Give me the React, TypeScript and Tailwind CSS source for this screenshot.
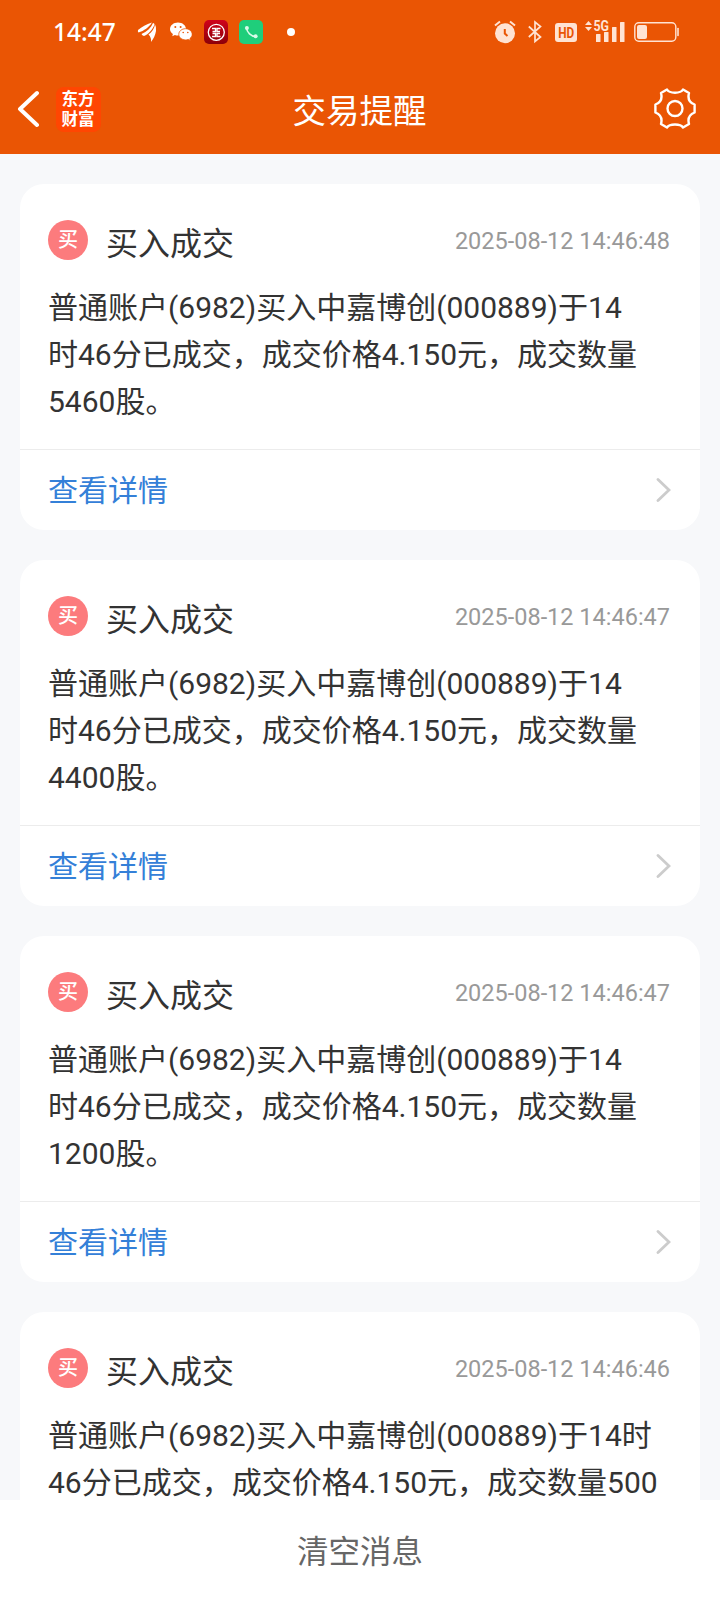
import React from "react";

type Message = {
  time: string;
  lines: string[];
};

// Данные уведомлений
const messages: Message[] = [
  {
    time: "2025-08-12 14:46:48",
    lines: [
      "普通账户(6982)买入中嘉博创(000889)于14",
      "时46分已成交，成交价格4.150元，成交数量",
      "5460股。",
    ],
  },
  {
    time: "2025-08-12 14:46:47",
    lines: [
      "普通账户(6982)买入中嘉博创(000889)于14",
      "时46分已成交，成交价格4.150元，成交数量",
      "4400股。",
    ],
  },
  {
    time: "2025-08-12 14:46:47",
    lines: [
      "普通账户(6982)买入中嘉博创(000889)于14",
      "时46分已成交，成交价格4.150元，成交数量",
      "1200股。",
    ],
  },
  {
    time: "2025-08-12 14:46:46",
    lines: [
      "普通账户(6982)买入中嘉博创(000889)于14时",
      "46分已成交，成交价格4.150元，成交数量500",
    ],
  },
];

const StatusBar: React.FC = () => (
  <div className="flex h-16 items-center justify-between pl-[53px] pr-[40px]">
    <div className="flex items-center">
      <span className="w-[64px] whitespace-nowrap font-['Noto_Sans'] text-[24.5px] leading-none font-medium text-white">
        14:47
      </span>
      {/* Крыло */}
      <svg className="ml-[20px]" width="20" height="20" viewBox="0 0 20 20" fill="#fff">
        <path d="M1 8C5 5 9 2 15 .5C12 5 7 9 1.500 10.500Q.5 9.500 1 8Z" />
        <path d="M4.500 12C10 9.500 14 6 16 1Q17.500 1 17.500 2.500C15.500 8 11.500 12 7 14Q5 13.500 4.500 12Z" />
        <path d="M11.500 12.500C15 10 17.500 6 18 2.500Q19.500 5 19 9C18.300 13 16.500 17 14 20C14.500 17 13.500 14.500 11.500 12.500Z" />
      </svg>
      {/* WeChat */}
      <svg className="ml-[13px]" width="22" height="20" viewBox="0 0 22 20">
        <path d="M8 .5C3.600.5 0 3.400 0 7C0 9 1.100 10.800 2.900 12L2.300 14.200L4.900 12.900Q6.400 13.500 8 13.500C12.400 13.500 16 10.600 16 7S12.400.5 8 .5Z" fill="#fff" />
        <path d="M15.500 6.700C11.800 6.700 8.800 9.200 8.800 12.300S11.800 17.900 15.500 17.900Q17 17.900 18.200 17.400L20.400 18.500L19.900 16.600C21.300 15.600 22.200 14 22.200 12.300C22.200 9.200 19.200 6.700 15.500 6.700Z" fill="#fff" stroke="#ea5504" strokeWidth=".8" />
        <circle cx="5.300" cy="5" r="1" fill="#ea5504" />
        <circle cx="10.600" cy="5" r="1" fill="#ea5504" />
        <circle cx="13.200" cy="10.500" r=".8" fill="#ea5504" />
        <circle cx="17.800" cy="10.500" r=".8" fill="#ea5504" />
      </svg>
      {/* ICBC */}
      <svg className="ml-[12px]" width="24" height="24" viewBox="0 0 24 24">
        <defs>
          <linearGradient id="icbc" x1="0" y1="0" x2="0" y2="1">
            <stop offset="0" stopColor="#d0021b" />
            <stop offset="1" stopColor="#8c0008" />
          </linearGradient>
        </defs>
        <rect width="24" height="24" rx="5" fill="url(#icbc)" />
        <g fill="none" stroke="#fff" strokeWidth="1.300">
          <circle cx="12.300" cy="12.300" r="8" />
          <path d="M8 8.500H11.500V11.500H8.500M16.500 8.500H13V11.500H16M8.500 13.500H11.500V16.500H8M16 13.500H13V16.500H16.500" />
        </g>
      </svg>
      {/* Телефон */}
      <svg className="ml-[11px]" width="24" height="24" viewBox="0 0 24 24">
        <rect width="24" height="24" rx="5" fill="#1fce7b" />
        <path d="M7.500 8C8 12.500 12 16.300 16.500 16.500" fill="none" stroke="#d9fbe9" strokeWidth="1.600" />
        <circle cx="7.900" cy="8" r="2" fill="#d9fbe9" />
        <circle cx="16.600" cy="16.300" r="2" fill="#d9fbe9" />
      </svg>
      <span className="ml-[24px] size-2 rounded-full bg-white" />
    </div>

    <div className="flex items-center">
      {/* Будильник */}
      <svg width="22" height="24" viewBox="0 0 22 24" fill="none">
        <circle cx="11" cy="13.200" r="10" fill="#ffe3d3" />
        <path d="M1 5.500L6 1.500M21 5.500L16 1.500" stroke="#ffe3d3" strokeWidth="2" />
        <path d="M10.800 9V13.500L13.500 16" stroke="#ea5504" strokeWidth="2" />
      </svg>
      {/* Bluetooth */}
      <svg className="ml-[12px]" width="14" height="24" viewBox="0 0 14 24">
        <path d="M.8 6.500L12.500 17L7 21.500V2L12.500 6.500L.8 17" fill="none" stroke="#ffe3d3" strokeWidth="1.700" />
      </svg>
      {/* HD */}
      <svg className="ml-[13px]" width="22" height="19" viewBox="0 0 22 19">
        <rect width="22" height="19" rx="3" fill="#ffe3d3" />
        <text x="3.200" y="15" fill="#ea5504" fontFamily="Roboto, sans-serif" fontSize="15.500" fontWeight="700" textLength="16" lengthAdjust="spacingAndGlyphs">
          HD
        </text>
      </svg>
      {/* Сигнал сети */}
      <svg className="ml-[8px]" width="41" height="24" viewBox="0 0 41 24" fill="#ffe3d3">
        <path d="M0 5L3.500 1L7 5ZM0 7L3.500 11L7 7Z" />
        <text x="8.500" y="11" fontFamily="Roboto, sans-serif" fontSize="14" fontWeight="700" textLength="15.500" lengthAdjust="spacingAndGlyphs">
          5G
        </text>
        <rect x="11" y="14" width="4.500" height="8" rx=".5" />
        <rect x="19" y="12" width="4.500" height="10" rx=".5" />
        <rect x="27" y="7" width="4.500" height="15" rx=".5" />
        <rect x="35" y="2" width="4.500" height="20" rx=".5" />
      </svg>
      {/* Батарея */}
      <svg className="ml-[8px]" width="46" height="20" viewBox="0 0 46 20">
        <rect x=".8" y=".8" width="41" height="18.400" rx="4" fill="none" stroke="#ffe3d3" strokeWidth="1.400" />
        <rect x="3" y="3" width="10" height="14" rx="2" fill="#ffe3d3" />
        <path d="M44 6.500V13.500" stroke="#ffe3d3" strokeWidth="1.600" strokeLinecap="round" />
      </svg>
    </div>
  </div>
);

const NavBar: React.FC = () => (
  <div className="flex h-[90px] items-center justify-between pr-[24px] pl-[17px]">
    <div className="flex items-center">
      <svg width="22" height="38" viewBox="0 0 22 38">
        <path d="M20 3L3 19L20 35" fill="none" stroke="#fff" strokeWidth="4" strokeLinecap="round" strokeLinejoin="round" />
      </svg>
      <div className="ml-[17px] flex size-[45px] items-center justify-center rounded-[8px] bg-[#ff4602]">
        <p className="-mt-px w-[34px] font-['Noto_Sans_CJK_SC'] text-[16.5px] leading-[19.5px] font-bold text-white">
          东方
          <br />
          财富
        </p>
      </div>
    </div>
    <h1 className="pt-[5px] pl-[12px] text-[33.5px] leading-none text-white">交易提醒</h1>
    <div className="flex w-[90px] justify-end">
      <svg className="-mt-px" width="42" height="42" viewBox="0 0 42 42" fill="none" stroke="#fff" strokeWidth="2.400" strokeLinejoin="round">
        <path d="M13 1.500C15.500 5.800 26.500 5.800 29 1.500L35 5C33.500 10.500 35.500 14.500 40.600 16.500V24.500C35.500 26.500 33.500 30.500 35 36L29 39.500C26.500 35.500 15.500 35.500 13 39.500L7 36C8.500 30.500 6.500 26.500 1.400 24.500V16.500C6.500 14.500 8.500 10.500 7 5Z" />
        <circle cx="21" cy="20.500" r="7.500" />
      </svg>
    </div>
  </div>
);

const MessageCard: React.FC<{ message: Message }> = ({ message }) => (
  <article className="h-[346px] shrink-0 rounded-[24px] bg-white">
    <div className="h-[265px] px-[28px] pt-[36px]">
      <div className="flex h-10 items-center">
        <span className="flex size-10 items-center justify-center rounded-full bg-[#fc7b7d] text-[20px] leading-none font-medium text-white">
          买
        </span>
        <h2 className="ml-[18px] pt-[8px] text-[32px] leading-none text-[#333]">
          买入成交
        </h2>
        <time className="ml-auto mr-[2px] pt-[4px] text-[23.5px] leading-none text-[#999]">
          {message.time}
        </time>
      </div>
      <div className="mt-[24px] text-[30px] leading-[47px] whitespace-nowrap text-[#333]">
        {message.lines.map((line) => (
          <p key={line}>{line}</p>
        ))}
      </div>
    </div>
    <a className="flex h-[81px] items-center justify-between border-t border-[#ececec] pl-[28px] pr-[29.5px] text-[#3480d8]">
      <span className="pt-[2px] text-[30px] leading-none">查看详情</span>
      <svg width="16" height="26" viewBox="0 0 16 26">
        <path d="M3 2.500L14 13L3 23.500" fill="none" stroke="#ccc" strokeWidth="2.800" strokeLinecap="round" />
      </svg>
    </a>
  </article>
);

const App: React.FC = () => {
  return (
    <div className="flex h-[1600px] w-[720px] flex-col overflow-hidden bg-[#f7f8fa] font-['Roboto','Noto_Sans_CJK_SC',sans-serif]">
      <header className="h-[154px] shrink-0 bg-[#ea5504]">
        <StatusBar />
        <NavBar />
      </header>

      {/* Список уведомлений */}
      <main className="flex min-h-0 flex-1 flex-col gap-[30px] overflow-hidden px-5 pt-[30px]">
        {messages.map((message, index) => (
          <MessageCard key={index} message={message} />
        ))}
      </main>

      <button className="h-[100px] shrink-0 bg-white pt-[5px] text-[31.5px] leading-none text-[#666]">
        清空消息
      </button>
    </div>
  );
};

export default App;
